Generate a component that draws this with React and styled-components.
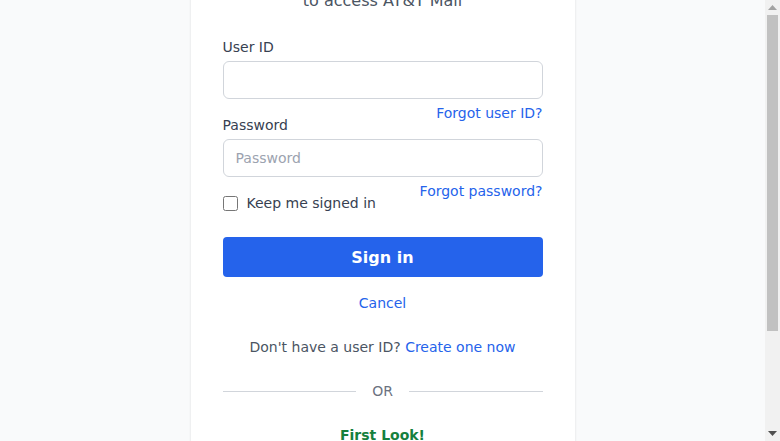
import React from "react";
import styled, { createGlobalStyle } from "styled-components";

const Global = createGlobalStyle`
  html, body { margin: 0; padding: 0; height: 100%; overflow: hidden; }
  body {
    background: #f9fafb;
    font-family: "DejaVu Sans", "Liberation Sans", sans-serif;
    color: #374151;
  }
  #root { height: 100%; }
  * { box-sizing: border-box; }
`;

const Shell = styled.div`
  display: flex;
  height: 100vh;
  background: #f9fafb;
`;

const Viewport = styled.div`
  flex: 1;
  min-width: 0;
  overflow: hidden;
`;

const ScrollTrack = styled.div`
  width: 15px;
  flex: none;
  background: #f1f1f1;
  display: flex;
  flex-direction: column;
  align-items: center;
`;

const ArrowBox = styled.div`
  height: 15px;
  width: 15px;
  display: flex;
  align-items: center;
  justify-content: center;
`;

const Thumb = styled.div`
  width: 11px;
  height: 316px;
  background: #c1c1c1;
`;

const Spacer = styled.div`
  flex: 1;
`;

const Page = styled.div`
  display: flex;
  flex-direction: column;
  align-items: center;
  padding-bottom: 28px;
`;

const Card = styled.main`
  width: 384px;
  margin-top: -131px;
  background: #ffffff;
  padding: 32px;
  box-shadow: 0 0 2px rgba(15, 23, 42, 0.08), 0 1px 3px rgba(15, 23, 42, 0.05);
  display: flex;
  flex-direction: column;
`;

const Header = styled.header`
  display: flex;
  flex-direction: column;
  align-items: center;
  margin-bottom: 24px;
`;

const Logo = styled.svg`
  width: 40px;
  height: 40px;
  margin-bottom: 16px;
`;

const Title = styled.h1`
  margin: 0;
  font-size: 24px;
  line-height: 32px;
  font-weight: 700;
  color: #111827;
`;

const Subtitle = styled.p`
  margin: 0;
  font-size: 16px;
  line-height: 24px;
  color: #4b5563;
`;

const Label = styled.label`
  display: block;
  font-size: 14px;
  line-height: 20px;
  color: #374151;
  margin-bottom: 4px;
`;

const Input = styled.input`
  display: block;
  width: 100%;
  height: 38px;
  border: 1px solid #d1d5db;
  border-radius: 6px;
  padding: 0 12px;
  font-family: inherit;
  font-size: 14px;
  color: #111827;
  background: #fff;
  outline: none;
  &::placeholder { color: #9ca3af; }
`;

const LinkRow = styled.div`
  display: flex;
  justify-content: flex-end;
  margin-top: 4px;
  margin-bottom: -8px;
  line-height: 20px;
`;

const TextLink = styled.a`
  color: #2563eb;
  font-size: 14px;
  line-height: 20px;
  text-decoration: none;
  cursor: pointer;
`;

const CheckRow = styled.label`
  display: flex;
  align-items: center;
  gap: 9px;
  height: 20px;
  font-size: 14px;
  line-height: 20px;
  color: #374151;
`;

const Check = styled.input`
  width: 15px;
  height: 15px;
  margin: 0;
`;

const PrimaryButton = styled.button`
  margin-top: 24px;
  width: 100%;
  height: 40px;
  border: none;
  border-radius: 4px;
  background: #2563eb;
  color: #fff;
  font-family: inherit;
  font-size: 16px;
  font-weight: 700;
  cursor: pointer;
`;

const Centered = styled.div`
  text-align: center;
  font-size: 14px;
  line-height: 20px;
  margin-top: ${(p) => p.$mt || 0}px;
  color: #4b5563;
`;

const Divider = styled.div`
  display: flex;
  align-items: center;
  gap: 16px;
  margin-top: 24px;
  font-size: 14px;
  line-height: 20px;
  color: #6b7280;
  &::before, &::after {
    content: "";
    flex: 1;
    height: 1px;
    background: #d1d5db;
  }
`;

const Promo = styled.div`
  margin-top: 24px;
  text-align: center;
`;

const PromoTitle = styled.div`
  font-size: 14px;
  line-height: 20px;
  font-weight: 700;
  color: #15803d;
`;

const PromoText = styled.p`
  margin: 4px 0 0;
  font-size: 13px;
  line-height: 20px;
  color: #4b5563;
`;

const Footer = styled.footer`
  margin-top: 16px;
  font-size: 12px;
  line-height: 16px;
  color: #6b7280;
`;

export default function App() {
  return (
    <>
      <Global />
      <Shell>
        <Viewport>
          <Page>
            <Card>
              <Header>
                <Logo viewBox="0 0 40 40" aria-hidden="true">
                  <circle cx="20" cy="20" r="19" fill="#00a8e0" />
                  <path d="M4 14h32M2 20h36M4 26h32" stroke="#fff" strokeWidth="2.5" />
                </Logo>
                <Title>Sign in</Title>
                <Subtitle>to access AT&amp;T Mail</Subtitle>
              </Header>

              <Label htmlFor="uid">User ID</Label>
              <Input id="uid" type="text" />
              <LinkRow>
                <TextLink>Forgot user ID?</TextLink>
              </LinkRow>

              <Label htmlFor="pwd">Password</Label>
              <Input id="pwd" type="password" placeholder="Password" />
              <LinkRow>
                <TextLink>Forgot password?</TextLink>
              </LinkRow>

              <CheckRow>
                <Check type="checkbox" />
                Keep me signed in
              </CheckRow>

              <PrimaryButton type="button">Sign in</PrimaryButton>

              <Centered $mt={16}>
                <TextLink>Cancel</TextLink>
              </Centered>

              <Centered $mt={24}>
                Don't have a user ID? <TextLink>Create one now</TextLink>
              </Centered>

              <Divider>OR</Divider>

              <Promo>
                <PromoTitle>First Look!</PromoTitle>
                <PromoText>Try the new AT&amp;T Mail experience today.</PromoText>
              </Promo>
            </Card>
            <Footer>© 2024 AT&amp;T Intellectual Property</Footer>
          </Page>
        </Viewport>
        <ScrollTrack aria-hidden="true">
          <ArrowBox>
            <svg width="9" height="5" viewBox="0 0 9 5">
              <path d="M4.5 0L9 5H0z" fill="#a3a3a3" />
            </svg>
          </ArrowBox>
          <Thumb />
          <Spacer />
          <ArrowBox>
            <svg width="9" height="5" viewBox="0 0 9 5">
              <path d="M0 0h9L4.5 5z" fill="#505050" />
            </svg>
          </ArrowBox>
        </ScrollTrack>
      </Shell>
    </>
  );
}
